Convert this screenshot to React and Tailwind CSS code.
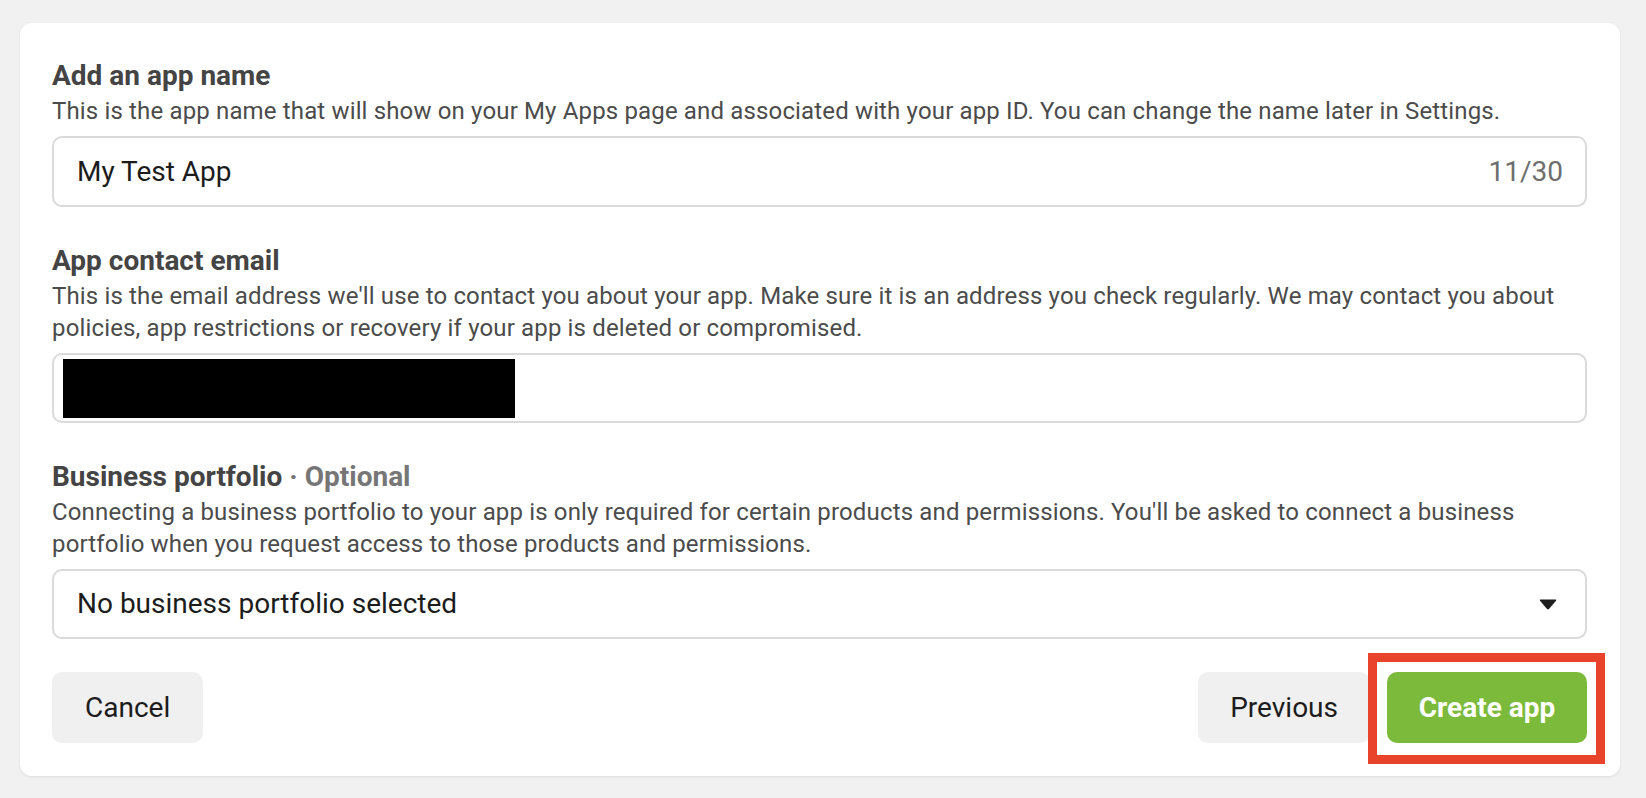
import { useState } from 'react'

const FONT = { fontFamily: 'Roboto, "Liberation Sans", sans-serif' }

function Section({ title, optional, children, desc }) {
  return (
    <div>
      <h2 className="text-[28px] leading-[34px] font-bold text-[#444444]">
        {title}
        {optional && <span className="text-[#767676]"> · {optional}</span>}
      </h2>
      <p className="mt-[2px] mb-[9px] text-[24px] leading-[32px] tracking-[0.15px] text-[#4b4b4b]">{desc}</p>
      {children}
    </div>
  )
}

export default function App() {
  const [name, setName] = useState('My Test App')

  return (
    <div className="min-h-[798px] bg-[#f1f1f1] pt-[23px] pb-[21px]" style={FONT}>
      <div className="ml-[20px] w-[1600px] bg-white rounded-[12px] shadow-[0_1px_3px_rgba(0,0,0,0.08)] pl-[32px] pr-[33px] pt-[36px] pb-[33px]">
        <div className="flex flex-col gap-[37px]">
          <Section
            title="Add an app name"
            desc="This is the app name that will show on your My Apps page and associated with your app ID. You can change the name later in Settings."
          >
            <div className="flex items-center h-[71px] border-2 border-[#dadada] rounded-[10px] pl-[23px] pr-[22px]">
              <input
                value={name}
                onChange={(e) => setName(e.target.value.slice(0, 30))}
                className="flex-1 min-w-0 outline-none bg-transparent text-[28px] text-[#1c1c1c]"
              />
              <span className="text-[28px] text-[#6e6e6e]">{name.length}/30</span>
            </div>
          </Section>

          <Section
            title="App contact email"
            desc="This is the email address we'll use to contact you about your app. Make sure it is an address you check regularly. We may contact you about policies, app restrictions or recovery if your app is deleted or compromised."
          >
            <div className="flex items-center h-[70px] border-2 border-[#dadada] rounded-[10px] pl-[9px]">
              {/* redacted email */}
              <div className="w-[452px] h-[59px] bg-black" />
            </div>
          </Section>

          <Section
            title="Business portfolio"
            optional="Optional"
            desc="Connecting a business portfolio to your app is only required for certain products and permissions. You'll be asked to connect a business portfolio when you request access to those products and permissions."
          >
            <button className="w-full flex items-center justify-between h-[70px] border-2 border-[#dadada] rounded-[10px] pl-[23px] pr-[28px] text-left">
              <span className="text-[28px] text-[#1c1c1c]">No business portfolio selected</span>
              <svg width="18" height="11" viewBox="0 0 18 11">
                <path d="M1.5 0.5 H16.5 Q18 0.5 17 1.8 L10.2 9.8 Q9 11 7.8 9.8 L1 1.8 Q0 0.5 1.5 0.5 Z" fill="#1e1e1e" />
              </svg>
            </button>
          </Section>
        </div>

        <div className="mt-[33px] flex items-center justify-between">
          <button className="h-[71px] px-[33px] rounded-[10px] bg-[#f0f0f0] text-[28px] text-[#1c1c1c]">Cancel</button>
          <div className="flex items-center gap-[17px]">
            <button className="h-[71px] px-[32px] rounded-[10px] bg-[#f0f0f0] text-[28px] text-[#1c1c1c]">Previous</button>
            <div className="relative">
              <button className="h-[71px] w-[200px] rounded-[10px] bg-[#7bba3a] text-[28px] font-bold text-white">Create app</button>
              {/* annotation highlight */}
              <div className="absolute -left-[19px] -top-[19px] -right-[18px] -bottom-[21px] border-[9px] border-[#e9432b] pointer-events-none" />
            </div>
          </div>
        </div>
      </div>
    </div>
  )
}
